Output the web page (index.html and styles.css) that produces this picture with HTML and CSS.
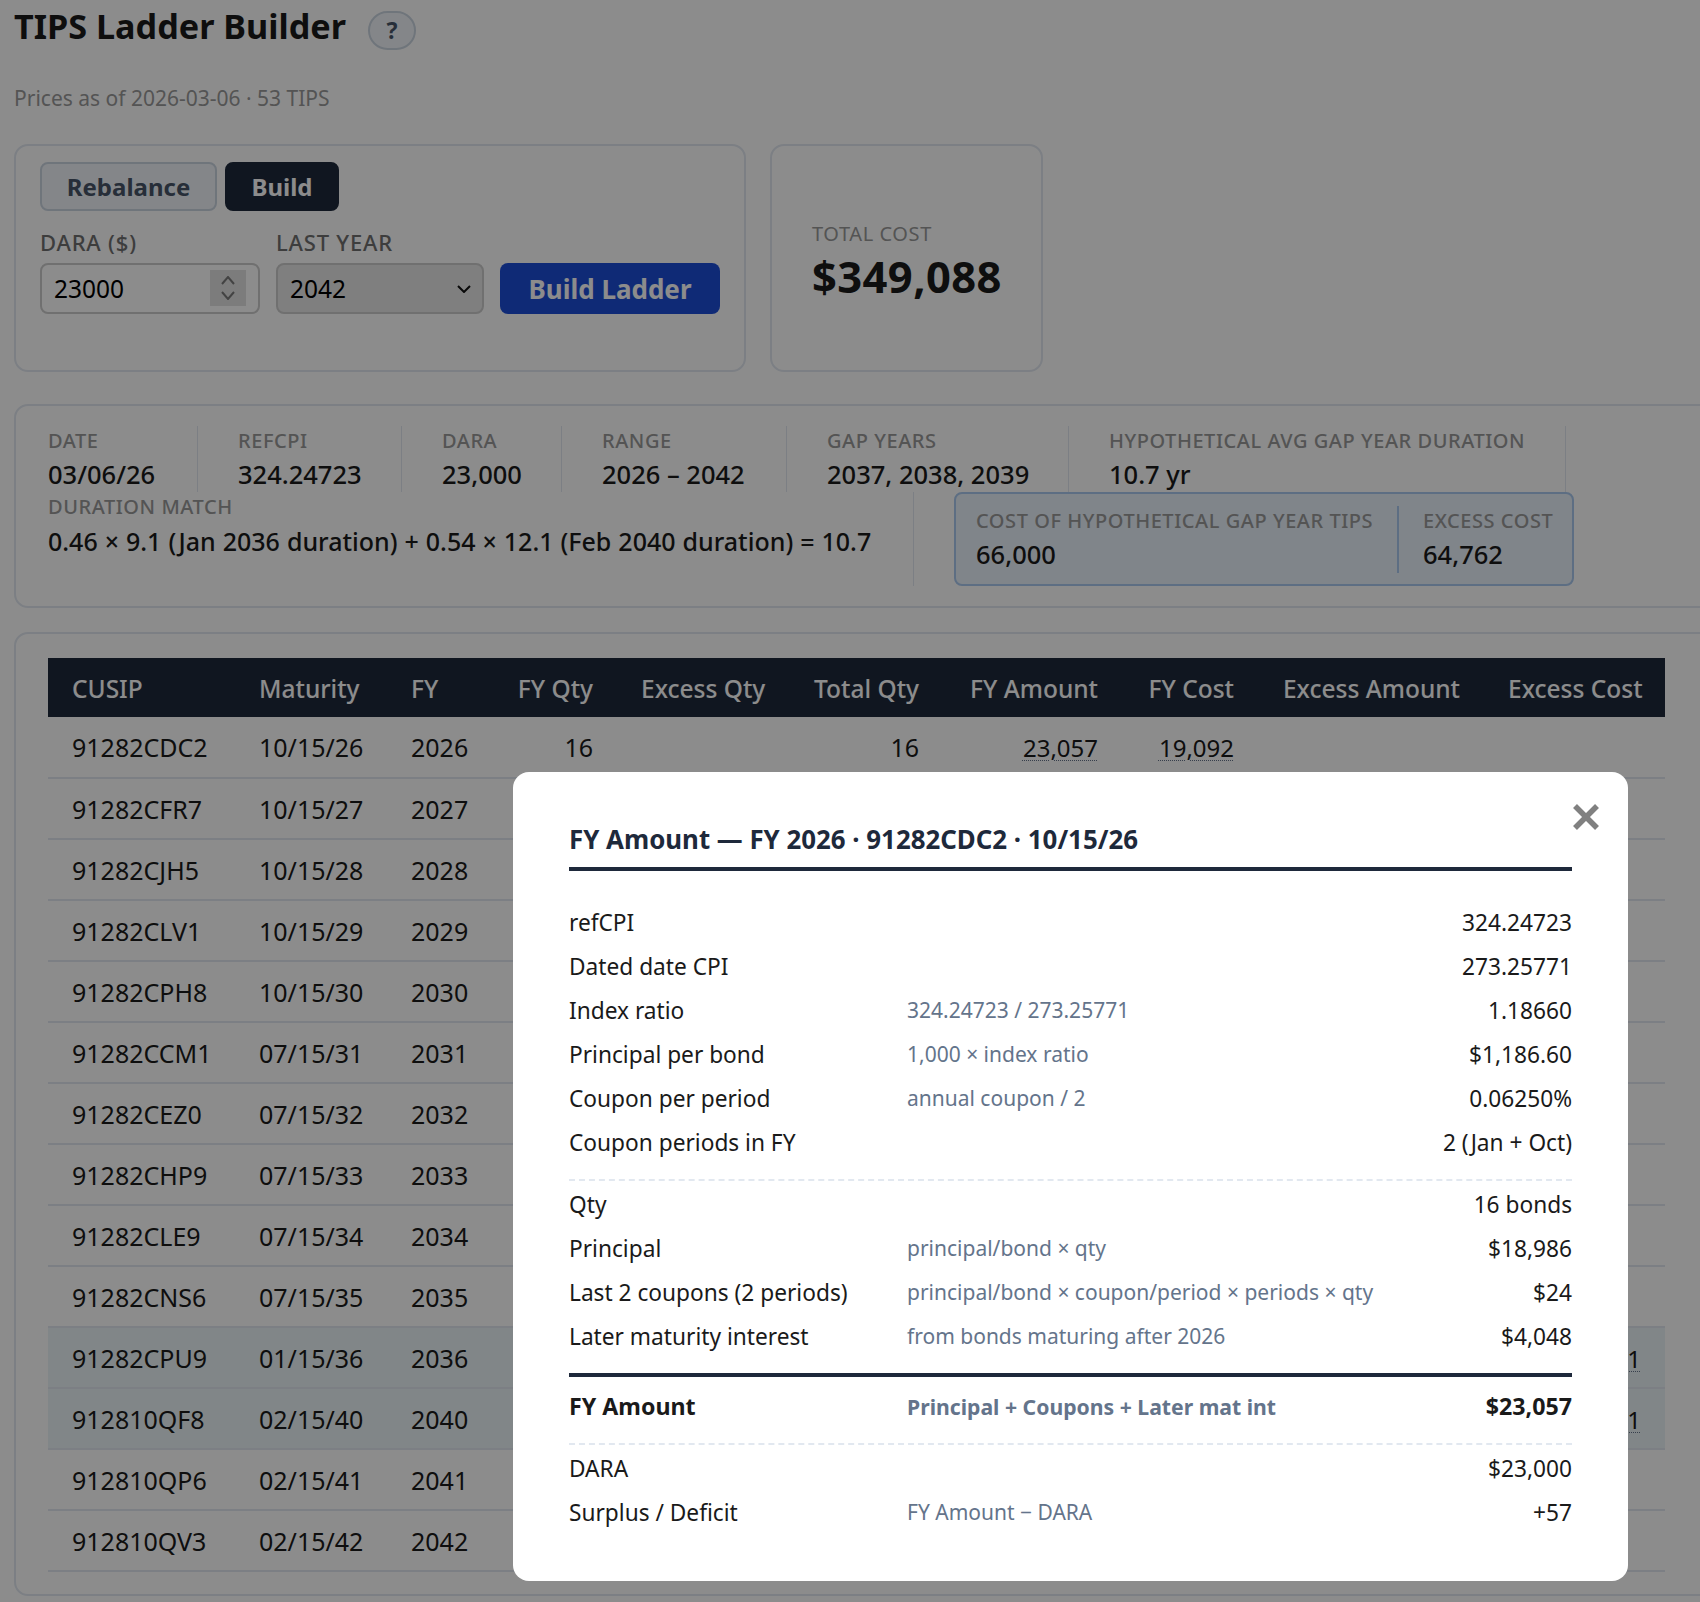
FILE: index.html
```html
<!DOCTYPE html>
<html lang="en">
<head>
    <meta charset="UTF-8">
    <meta name="viewport" content="width=device-width, initial-scale=1.0">
    <title>TIPS Ladder Builder</title>
    <link rel="stylesheet" href="styles.css">
</head>
<body>
    <div class="title-row">
        <h1>TIPS Ladder Builder</h1>
        <button class="help-btn">?</button>
    </div>
    <p class="subtitle">Prices as of 2026-03-06 · 53 TIPS</p>

    <div class="top-row">
        <div class="card controls">
            <div class="mode-tabs">
                <button class="tab">Rebalance</button>
                <button class="tab tab-active">Build</button>
            </div>
            <div class="fields">
                <div class="field">
                    <label class="field-label">DARA ($)</label>
                    <div class="input-wrap">
                        <input class="field-input dara-input" type="number" value="23000">
                        <div class="spinner">
                            <svg width="14" height="24" viewBox="0 0 14 24" fill="none" stroke="#7a7a7a" stroke-width="2"><path d="M1 8l6-7 6 7"/><path d="M1 16l6 7 6-7"/></svg>
                        </div>
                    </div>
                </div>
                <div class="field">
                    <label class="field-label">LAST YEAR</label>
                    <div class="input-wrap">
                        <select class="field-input year-select"><option>2042</option></select>
                        <svg class="select-arrow" width="14" height="8" viewBox="0 0 14 8" fill="none" stroke="#111" stroke-width="2"><path d="M1 1l6 6 6-6"/></svg>
                    </div>
                </div>
                <button class="build-btn">Build Ladder</button>
            </div>
        </div>
        <div class="card total-card">
            <div class="total-label">TOTAL COST</div>
            <div class="total-value">$349,088</div>
        </div>
    </div>

    <div class="card summary">
        <div class="stat-row">
            <div class="stat stat-date"><div class="stat-label">DATE</div><div class="stat-value">03/06/26</div></div>
            <div class="stat stat-cpi"><div class="stat-label">REFCPI</div><div class="stat-value">324.24723</div></div>
            <div class="stat stat-dara"><div class="stat-label">DARA</div><div class="stat-value">23,000</div></div>
            <div class="stat stat-range"><div class="stat-label">RANGE</div><div class="stat-value">2026 – 2042</div></div>
            <div class="stat stat-gap"><div class="stat-label">GAP YEARS</div><div class="stat-value">2037, 2038, 2039</div></div>
            <div class="stat stat-hypo"><div class="stat-label">HYPOTHETICAL AVG GAP YEAR DURATION</div><div class="stat-value">10.7 yr</div></div>
        </div>
        <div class="match-row">
            <div class="stat stat-match">
                <div class="stat-label">DURATION MATCH</div>
                <div class="stat-value">0.46 × 9.1 (Jan 2036 duration) + 0.54 × 12.1 (Feb 2040 duration) = 10.7</div>
            </div>
            <div class="gap-box">
                <div class="gap-cost"><div class="stat-label">COST OF HYPOTHETICAL GAP YEAR TIPS</div><div class="stat-value">66,000</div></div>
                <div class="gap-excess"><div class="stat-label">EXCESS COST</div><div class="stat-value">64,762</div></div>
            </div>
        </div>
    </div>

    <div class="card table-card">
        <table class="ladder">
            <colgroup>
                <col class="c-cusip"><col class="c-mat"><col class="c-fy"><col class="c-fyqty"><col class="c-exqty">
                <col class="c-totqty"><col class="c-fyamt"><col class="c-fycost"><col class="c-examt"><col class="c-excost">
            </colgroup>
            <thead>
                <tr>
                    <th>CUSIP</th><th>Maturity</th><th>FY</th>
                    <th class="num">FY Qty</th><th class="num">Excess Qty</th><th class="num">Total Qty</th>
                    <th class="num">FY Amount</th><th class="num">FY Cost</th><th class="num">Excess Amount</th><th class="num">Excess Cost</th>
                </tr>
            </thead>
            <tbody>
                <tr><td>91282CDC2</td><td>10/15/26</td><td>2026</td><td class="num">16</td><td></td><td class="num">16</td><td class="num"><span class="link">23,057</span></td><td class="num"><span class="link">19,092</span></td><td></td><td></td></tr>
                <tr><td>91282CFR7</td><td>10/15/27</td><td>2027</td><td colspan="7"></td></tr>
                <tr><td>91282CJH5</td><td>10/15/28</td><td>2028</td><td colspan="7"></td></tr>
                <tr><td>91282CLV1</td><td>10/15/29</td><td>2029</td><td colspan="7"></td></tr>
                <tr><td>91282CPH8</td><td>10/15/30</td><td>2030</td><td colspan="7"></td></tr>
                <tr><td>91282CCM1</td><td>07/15/31</td><td>2031</td><td colspan="7"></td></tr>
                <tr><td>91282CEZ0</td><td>07/15/32</td><td>2032</td><td colspan="7"></td></tr>
                <tr><td>91282CHP9</td><td>07/15/33</td><td>2033</td><td colspan="7"></td></tr>
                <tr><td>91282CLE9</td><td>07/15/34</td><td>2034</td><td colspan="7"></td></tr>
                <tr><td>91282CNS6</td><td>07/15/35</td><td>2035</td><td colspan="7"></td></tr>
                <tr class="hl"><td>91282CPU9</td><td>01/15/36</td><td>2036</td><td colspan="6"></td><td class="num"><span class="link">1</span></td></tr>
                <tr class="hl"><td>912810QF8</td><td>02/15/40</td><td>2040</td><td colspan="6"></td><td class="num"><span class="link">1</span></td></tr>
                <tr><td>912810QP6</td><td>02/15/41</td><td>2041</td><td colspan="7"></td></tr>
                <tr><td>912810QV3</td><td>02/15/42</td><td>2042</td><td colspan="7"></td></tr>
            </tbody>
        </table>
    </div>

    <div class="overlay">
        <div class="modal">
            <button class="close-btn">
                <svg width="26" height="26" viewBox="0 0 26 26" fill="none" stroke="#808080" stroke-width="5.5"><path d="M2 2l22 22"/><path d="M24 2L2 24"/></svg>
            </button>
            <h3 class="modal-title">FY Amount — FY 2026 · 91282CDC2 · 10/15/26</h3>
            <div class="calc-group first">
                <div class="calc"><span>refCPI</span><span class="formula"></span><span class="amt">324.24723</span></div>
                <div class="calc"><span>Dated date CPI</span><span class="formula"></span><span class="amt">273.25771</span></div>
                <div class="calc"><span>Index ratio</span><span class="formula">324.24723 / 273.25771</span><span class="amt">1.18660</span></div>
                <div class="calc"><span>Principal per bond</span><span class="formula">1,000 × index ratio</span><span class="amt">$1,186.60</span></div>
                <div class="calc"><span>Coupon per period</span><span class="formula">annual coupon / 2</span><span class="amt">0.06250%</span></div>
                <div class="calc"><span>Coupon periods in FY</span><span class="formula"></span><span class="amt">2 (Jan + Oct)</span></div>
            </div>
            <div class="calc-group dashed">
                <div class="calc"><span>Qty</span><span class="formula"></span><span class="amt">16 bonds</span></div>
                <div class="calc"><span>Principal</span><span class="formula">principal/bond × qty</span><span class="amt">$18,986</span></div>
                <div class="calc"><span>Last 2 coupons (2 periods)</span><span class="formula">principal/bond × coupon/period × periods × qty</span><span class="amt">$24</span></div>
                <div class="calc"><span>Later maturity interest</span><span class="formula">from bonds maturing after 2026</span><span class="amt">$4,048</span></div>
            </div>
            <div class="calc-group total">
                <div class="calc"><span>FY Amount</span><span class="formula">Principal + Coupons + Later mat int</span><span class="amt">$23,057</span></div>
            </div>
            <div class="calc-group dashed">
                <div class="calc"><span>DARA</span><span class="formula"></span><span class="amt">$23,000</span></div>
                <div class="calc"><span>Surplus / Deficit</span><span class="formula">FY Amount − DARA</span><span class="amt">+57</span></div>
            </div>
        </div>
    </div>
</body>
</html>
```
FILE: styles.css
```css
/* TIPS ladder page */
html {
    overflow: hidden;
}

body {
    font-family: "Noto Sans", "Open Sans", sans-serif;
    color: #1a1a1a;
    background-color: #fff;
    margin: 0;
    padding: 0 14px;
    width: 1760px;
    height: 1602px;
    box-sizing: border-box;
}

.title-row {
    display: flex;
    align-items: center;
    height: 52px;
}

h1 {
    font-size: 34.2px;
    font-weight: 700;
    margin: -2px 22px 0 0;
}

.help-btn {
    width: 48px;
    height: 39px;
    margin-top: 8px;
    border: 2px solid #cbd5e1;
    border-radius: 20px;
    background-color: #f1f5f9;
    color: #475569;
    font: 700 23px "Noto Sans", sans-serif;
    padding: 0;
}

.subtitle {
    margin: 30px 0 0 0;
    font-size: 21px;
    line-height: 32px;
    color: #999;
}

.card {
    border: 2px solid #e2e8f0;
    border-radius: 14px;
    box-sizing: border-box;
    background-color: #fff;
}

.top-row {
    display: flex;
    gap: 24px;
    margin-top: 30px;
}

.controls {
    width: 732px;
    height: 228px;
    padding: 16px 24px;
}

.mode-tabs {
    display: flex;
    gap: 8px;
}

.tab {
    height: 49px;
    width: 177px;
    border: 2px solid #cbd5e1;
    border-radius: 8px;
    background-color: #f1f5f9;
    color: #475569;
    font: 700 24px "Noto Sans", sans-serif;
}

.tab-active {
    width: 114px;
    border-color: #1e293b;
    background-color: #1e293b;
    color: #fff;
}

.fields {
    display: flex;
    align-items: flex-end;
    gap: 16px;
    margin-top: 16px;
}

.field-label {
    display: block;
    font-size: 22px;
    font-weight: 500;
    line-height: 30px;
    letter-spacing: 0.8px;
    color: #707070;
    margin-bottom: 6px;
}

.input-wrap {
    position: relative;
}

.field-input {
    display: block;
    height: 51px;
    box-sizing: border-box;
    border: 2px solid #ccc;
    border-radius: 8px;
    font: 24.5px "Noto Sans", sans-serif;
    color: #000;
    padding: 0 12px;
    appearance: none;
}

.dara-input {
    width: 220px;
    background-color: #fff;
}

.dara-input::-webkit-inner-spin-button {
    display: none;
}

.spinner {
    position: absolute;
    top: 7px;
    right: 14px;
    width: 36px;
    height: 36px;
    background-color: #e2e2e2;
    display: flex;
    align-items: center;
    justify-content: center;
}

.year-select {
    width: 208px;
    background-color: #e8e8e8;
}

.select-arrow {
    position: absolute;
    top: 22px;
    right: 13px;
}

.build-btn {
    width: 221px;
    height: 51px;
    border: none;
    border-radius: 8px;
    background-color: #1d4ed8;
    color: #fff;
    font: 700 26px "Noto Sans", sans-serif;
}

.total-card {
    width: 273px;
    height: 228px;
    padding: 74px 30px 0 40px;
}

.total-label {
    font-size: 20px;
    line-height: 27px;
    letter-spacing: 0.6px;
    color: #999;
}

.total-value {
    font-size: 43.5px;
    line-height: 59px;
    letter-spacing: 0.4px;
    font-weight: 700;
}

.summary {
    height: 204px;
    margin-top: 32px;
    padding: 20px 32px 0 32px;
}

.stat-row {
    display: flex;
    height: 66px;
}

.stat-label {
    font-size: 20px;
    line-height: 30px;
    letter-spacing: 0.55px;
    color: #999;
    font-weight: 500;
    white-space: nowrap;
}

.stat-value {
    font-size: 25.5px;
    line-height: 36px;
    font-weight: 500;
    white-space: nowrap;
}

.stat-row .stat {
    box-sizing: border-box;
    border-right: 1px solid #e2e8f0;
    padding: 0 40px;
}

.stat-row .stat-date {
    padding-left: 0;
    width: 150px;
}

.stat-cpi {
    width: 204px;
}

.stat-dara {
    width: 160px;
}

.stat-range {
    width: 225px;
}

.stat-gap {
    width: 282px;
}

.stat-hypo {
    width: 497px;
}

.match-row {
    display: flex;
}

.stat-match {
    width: 866px;
    height: 94px;
    flex: none;
    border-right: 1px solid #e2e8f0;
    box-sizing: border-box;
}

.stat-match .stat-value {
    font-size: 25px;
    line-height: 38px;
    word-spacing: 0.5px;
}

.gap-box {
    display: flex;
    margin-left: 40px;
    width: 620px;
    height: 94px;
    box-sizing: border-box;
    border: 2px solid #a9c8ee;
    border-radius: 8px;
    background-color: #eaf2fb;
    padding: 12px 0 0 20px;
}

.gap-cost {
    width: 423px;
    height: 67px;
    border-right: 2px solid #a9c8ee;
    box-sizing: border-box;
}

.gap-excess {
    padding-left: 24px;
}

.table-card {
    height: 964px;
    margin-top: 24px;
    padding: 24px 32px;
}

.ladder {
    width: 1617px;
    table-layout: fixed;
    border-collapse: collapse;
    font-size: 25px;
}

.c-cusip { width: 187px; }
.c-mat { width: 152px; }
.c-fy { width: 104px; }
.c-fyqty { width: 126px; }
.c-exqty { width: 172px; }
.c-totqty { width: 154px; }
.c-fyamt { width: 179px; }
.c-fycost { width: 136px; }
.c-examt { width: 226px; }
.c-excost { width: 181px; }

.ladder th {
    height: 57px;
    padding: 2px 24px 0 24px;
    background-color: #1e293b;
    color: #fff;
    font-size: 24.5px;
    font-weight: 500;
    text-align: left;
    white-space: nowrap;
}

.ladder td {
    height: 61px;
    box-sizing: border-box;
    padding: 0 24px;
    border-bottom: 2px solid #e2e8f0;
    white-space: nowrap;
}

.ladder th.num,
.ladder td.num {
    text-align: right;
}

.hl td {
    background-color: #ecf5f7;
}

.link {
    font-size: 24px;
    text-decoration: underline dotted #64748b 1px;
    text-underline-offset: 3px;
}

.overlay {
    position: fixed;
    inset: 0;
    background-color: rgba(0, 0, 0, 0.45);
}

.modal {
    position: absolute;
    left: 513px;
    top: 772px;
    width: 1115px;
    height: 809px;
    box-sizing: border-box;
    padding: 44px 56px;
    border-radius: 16px;
    background-color: #fff;
}

.close-btn {
    position: absolute;
    top: 32px;
    right: 29px;
    width: 26px;
    height: 26px;
    border: none;
    background: none;
    padding: 0;
}

.modal-title {
    margin: 0;
    padding-bottom: 10px;
    height: 55px;
    box-sizing: border-box;
    border-bottom: 4px solid #1e293b;
    font-size: 25.85px;
    line-height: 47px;
    font-weight: 700;
    color: #1e293b;
}

.calc-group.first {
    padding-top: 29px;
}

.calc {
    display: grid;
    grid-template-columns: 338px 1fr auto;
    align-items: center;
    height: 44px;
    font-size: 22.7px;
    color: #1a1a1a;
}

.formula {
    font-size: 21px;
    color: #64748b;
}

.amt {
    text-align: right;
}

.dashed {
    margin-top: 15px;
    padding-top: 1px;
    border-top: 2px dashed #e2e8f0;
}

.total {
    margin-top: 15px;
    padding-top: 7px;
    padding-bottom: 7px;
    border-top: 4px solid #1e293b;
}

.total .calc {
    font-size: 23.2px;
    font-weight: 700;
}

.total .formula {
    font-size: 21.2px;
}

.total + .dashed {
    margin-top: 8px;
}
```
